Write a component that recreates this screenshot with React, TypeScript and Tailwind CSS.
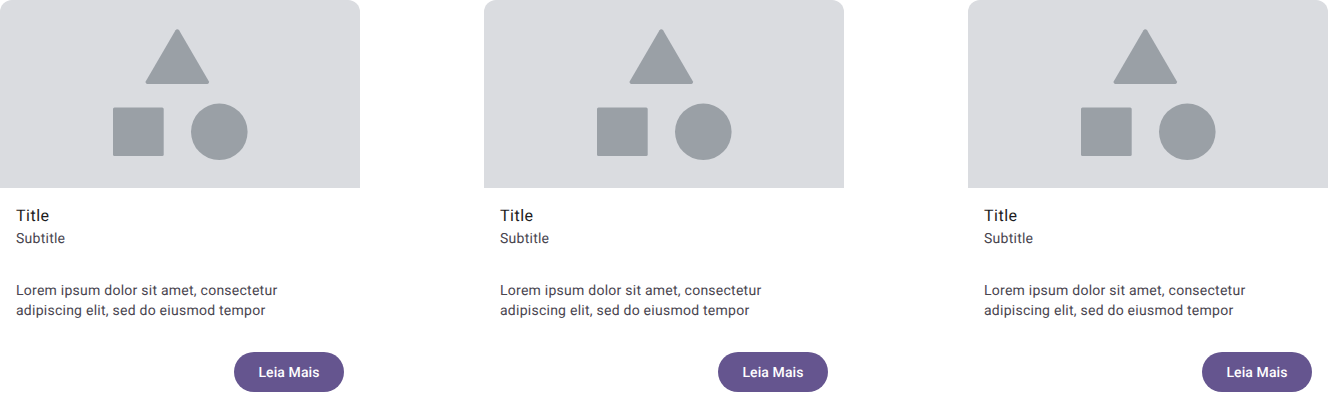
const cards = [0, 1, 2];

function Media() {
  return (
    <div className="h-[188px] w-full bg-[#dadce0]">
      <svg width="360" height="188" viewBox="0 0 360 188" fill="#9aa0a6" aria-hidden="true">
        <path d="M175.5 30.3a2.1 2.1 0 0 1 3.6 0l29.7 50.9a1.9 1.9 0 0 1-1.6 2.8h-59.8a1.9 1.9 0 0 1-1.6-2.8z" />
        <rect x="113" y="107.5" width="50.7" height="48.6" rx="1.5" />
        <circle cx="219.3" cy="131.8" r="28.3" />
      </svg>
    </div>
  );
}

function Card() {
  return (
    <article className="flex h-[408px] w-[360px] flex-col overflow-hidden rounded-xl bg-white">
      <Media />
      <div className="flex flex-col px-4 pt-4">
        <h2 className="text-base leading-6 tracking-[0.5px] text-[#1d1b20]">Title</h2>
        <p className="mt-px text-sm leading-5 tracking-[0.25px] text-[#49454f]">Subtitle</p>
        <p className="mt-8 text-sm leading-5 tracking-[0.25px] text-[#49454f]">
          Lorem ipsum dolor sit amet, consectetur
          <br />
          adipiscing elit, sed do eiusmod tempor
        </p>
      </div>
      <div className="mt-auto flex justify-end p-4">
        <button className="h-10 w-[110px] rounded-full bg-[#65558f] pt-0.5 text-sm leading-5 font-medium tracking-[0.1px] text-white [text-rendering:geometricPrecision]">
          Leia Mais
        </button>
      </div>
    </article>
  );
}

export default function App() {
  return (
    <main className="flex h-[408px] w-[1328px] justify-between bg-white font-['Roboto',sans-serif] [text-rendering:geometricPrecision]">
      {cards.map((id) => (
        <Card key={id} />
      ))}
    </main>
  );
}
